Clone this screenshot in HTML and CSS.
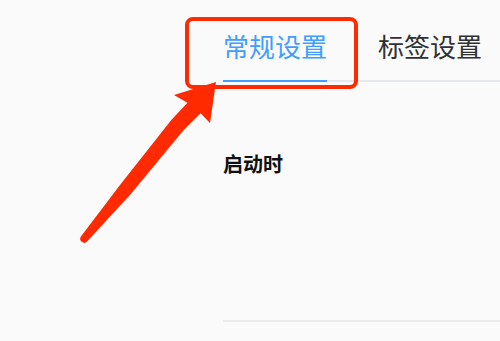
FILE: index.html
```html
<!DOCTYPE html>
<html lang="zh-CN">
<head>
<meta charset="utf-8">
<link rel="stylesheet" href="styles.css">
</head>
<body>
<div class="page">
  <aside class="side"></aside>
  <main class="content">
    <nav class="tabs">
      <div class="tab active">常规设置</div>
      <div class="tab">标签设置</div>
    </nav>
    <section class="group">
      <h3 class="group-title">启动时</h3>
    </section>
    <div class="divider"></div>
  </main>
</div>
<div class="highlight"></div>
<svg class="arrow" width="500" height="341" viewBox="0 0 500 341">
  <path d="M216,82 L174,95 L187.4,102.7 L171.3,120 L119.6,185.6 L80.9,236.5 A4,4 0 0 0 87.1,241.5 L130.4,194.4 L183.7,130 L200.6,113.3 L210,123 Z" fill="#ff2a00"/>
</svg>
</body>
</html>
```
FILE: styles.css
```css
html, body {
  margin: 0;
  padding: 0;
  background: #fafafa;
  overflow: hidden;
}
body {
  width: 500px;
  height: 341px;
  font-family: "Noto Sans CJK SC", "Noto Sans", sans-serif;
  position: relative;
}
.page {
  display: grid;
  grid-template-columns: 223px 1fr;
  height: 341px;
}
.content {
  display: flex;
  flex-direction: column;
}
.tabs {
  display: flex;
  gap: 51px;
  padding-top: 16px;
  border-bottom: 2px solid #e4e7ed;
}
.tab {
  font-size: 26px;
  line-height: 60px;
  padding-bottom: 4px;
  color: #303133;
  white-space: nowrap;
  margin-bottom: -2px;
  border-bottom: 2px solid transparent;
}
.tab.active {
  color: #409eff;
  border-bottom-color: #409eff;
}
.group {
  margin-top: 72px;
  height: 166px;
}
.group-title {
  margin: 0;
  font-size: 20px;
  line-height: 20px;
  font-weight: bold;
  color: #111;
}
.divider {
  height: 2px;
  background: #ebebeb;
}
.highlight {
  position: absolute;
  left: 185px;
  top: 17px;
  width: 165px;
  height: 64px;
  border: 4px solid #ff2a00;
  border-radius: 8px;
}
.arrow {
  position: absolute;
  left: 0;
  top: 0;
}
```
